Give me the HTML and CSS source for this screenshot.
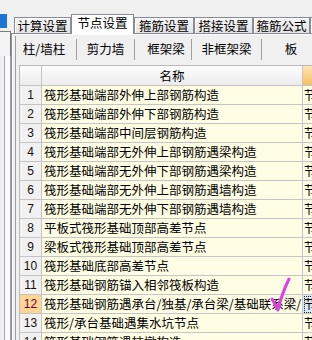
FILE: index.html
```html
<!doctype html>
<html>
<head>
<meta charset="utf-8">
<title>节点设置</title>
<link rel="stylesheet" href="styles.css">
</head>
<body>
<div class="app">

<div class="side">
    <div class="side-sel"></div>
    <div class="side-box"></div>
    <div class="side-list"></div>
</div>

<div class="main">
    <div class="tabs">
        <div class="tab t1">计算设置</div>
        <div class="tab t2 on">节点设置</div>
        <div class="tab t3">箍筋设置</div>
        <div class="tab t4">搭接设置</div>
        <div class="tab t5">箍筋公式</div>
        <div class="tab t6">修改</div>
    </div>

    <div class="page">
        <div class="inner">
            <div class="subtabs">
                <div class="sub s1">柱/墙柱</div>
                <div class="sub s2">剪力墙</div>
                <div class="sub s3">框架梁</div>
                <div class="sub s4">非框架梁</div>
                <div class="sub s5">板</div>
            </div>

            <div class="grid">
                <table>
                <colgroup>
                    <col class="c-no">
                    <col class="c-name">
                    <col class="c-pic">
                </colgroup>
                <tr class="head">
                    <td class="no"></td>
                    <td class="name">名称</td>
                    <td class="pic"></td>
                </tr>
                <tr><td class="no">1</td><td class="name">筏形基础端部外伸上部钢筋构造</td><td class="pic">节点图</td></tr>
                <tr><td class="no">2</td><td class="name">筏形基础端部外伸下部钢筋构造</td><td class="pic">节点图</td></tr>
                <tr><td class="no">3</td><td class="name">筏形基础端部中间层钢筋构造</td><td class="pic">节点图</td></tr>
                <tr><td class="no">4</td><td class="name">筏形基础端部无外伸上部钢筋遇梁构造</td><td class="pic">节点图</td></tr>
                <tr><td class="no">5</td><td class="name">筏形基础端部无外伸下部钢筋遇梁构造</td><td class="pic">节点图</td></tr>
                <tr><td class="no">6</td><td class="name">筏形基础端部无外伸上部钢筋遇墙构造</td><td class="pic">节点图</td></tr>
                <tr><td class="no">7</td><td class="name">筏形基础端部无外伸下部钢筋遇墙构造</td><td class="pic">节点图</td></tr>
                <tr><td class="no">8</td><td class="name">平板式筏形基础顶部高差节点</td><td class="pic">节点图</td></tr>
                <tr><td class="no">9</td><td class="name">梁板式筏形基础顶部高差节点</td><td class="pic">节点图</td></tr>
                <tr><td class="no">10</td><td class="name">筏形基础底部高差节点</td><td class="pic">节点图</td></tr>
                <tr><td class="no">11</td><td class="name">筏形基础钢筋锚入相邻筏板构造</td><td class="pic">节点图</td></tr>
                <tr class="cur"><td class="no">12</td><td class="name">筏形基础钢筋遇承台/独基/承台梁/基础联系梁/</td><td class="pic">节点图</td></tr>
                <tr><td class="no">13</td><td class="name">筏形/承台基础遇集水坑节点</td><td class="pic">节点图</td></tr>
                <tr><td class="no">14</td><td class="name">筏形基础钢筋遇柱墩构造</td><td class="pic">节点图</td></tr>
                </table>
            </div>
        </div>
    </div>
</div>

</div>

<svg class="mark" width="312" height="340" viewBox="0 0 312 340">
    <path d="M272 299 Q275 304 278 310 Q282 293 289 279" fill="none" stroke="#e23de6" stroke-width="3" stroke-linecap="round" stroke-linejoin="round"/>
</svg>

</body>
</html>
```

FILE: styles.css
```css
body {
    margin: 0;
    width: 312px;
    height: 340px;
    overflow: hidden;
    background-color: #f0f0f0;
    font-family: "Noto Sans CJK SC", sans-serif;
    font-size: 12.5px;
    color: black;
}

.app {
    display: flex;
    height: 340px;
}

/* left strip, mostly cut off */
.side {
    width: 11px;
    flex: none;
    display: flex;
    flex-direction: column;
    padding-top: 14px;
    box-sizing: border-box;
}
.side-sel {
    width: 7px;
    height: 14px;
    background-color: #1c74d4;
}
.side-box {
    height: 24px;
    margin-top: 3px;
    border-top: 1px solid #7a7a7a;
    border-right: 1px solid #7a7a7a;
    background-color: #f4f4f4;
}
.side-list {
    flex: 1;
    border-right: 1px solid #a0a0a0;
    border-left: 1px solid #a8a8a8;
    margin-left: 4px;
    background-color: #fbfbfb;
}

.main {
    flex: 1;
    min-width: 0;
    display: flex;
    flex-direction: column;
}

/* top tabs */
.tabs {
    height: 33px;
    display: flex;
    align-items: flex-end;
    padding-left: 3px;
    position: relative;
    z-index: 1;
}
.tab {
    flex: none;
    box-sizing: border-box;
    height: 16px;
    border: 1px solid #898c95;
    border-bottom: none;
    background: linear-gradient(#f6f6f6, #e3e3e3);
    box-shadow: inset 1px 1px #ffffff;
    display: flex;
    align-items: center;
    justify-content: center;
    line-height: 1;
    padding-top: 1px;
}
.tab.on {
    height: 20px;
    margin-bottom: -1px;
    background: #ffffff;
    box-shadow: none;
    padding-top: 0;
    padding-bottom: 2px;
}
.t1 { width: 57px; }
.t2 { width: 63px; }
.t3 { width: 60px; }
.t4 { width: 59px; }
.t5 { width: 57px; }
.t6 { width: 40px; }

.page {
    flex: 1;
    min-height: 0;
    border-top: 1px solid #898c95;
    border-left: 1px solid #898c95;
    box-shadow: inset 1px 1px #ffffff;
    padding: 2px 0 0 3px;
    display: flex;
}
.inner {
    flex: 1;
    min-width: 0;
    border-left: 1px solid #a0a0a0;
    padding-left: 3px;
    display: flex;
    flex-direction: column;
}

/* second row of tabs */
.subtabs {
    height: 26px;
    margin-left: -3px;
    display: flex;
    align-items: center;
    flex: none;
}
.sub {
    flex: none;
    box-sizing: border-box;
    height: 21px;
    border-right: 1px solid #a0a0a0;
    display: flex;
    align-items: center;
    justify-content: center;
    line-height: 1;
}
.s1 { width: 61px; padding-right: 4px; }
.s2 { width: 58px; }
.s3 { width: 57px; padding-left: 6px; }
.s4 { width: 70px; }
.s5 { width: 58px; border-right: none; }

/* the list */
.grid {
    margin-top: 3px;
    flex: 1;
    min-height: 0;
    overflow: hidden;
}
table {
    table-layout: fixed;
    width: 344px;
    border-collapse: separate;
    border-spacing: 0;
    border-top: 1px solid #b9b9b9;
    border-left: 1px solid #b9b9b9;
}
col.c-no { width: 22px; }
col.c-name { width: 261px; }
col.c-pic { width: 61px; }

td {
    height: 19px;
    padding: 0;
    box-sizing: border-box;
    border-right: 1px solid #c4c4c4;
    border-bottom: 1px solid #c4c4c4;
    white-space: nowrap;
    overflow: hidden;
    line-height: 18px;
}
td.no {
    text-align: center;
    font-family: "Liberation Sans", sans-serif;
    font-size: 12px;
    background-color: #f1f1f1;
    color: #111111;
}
td.name {
    padding-left: 2px;
    background-color: #fffee4;
}
td.pic {
    padding-left: 1px;
    background-color: #fffee4;
}

tr.head td {
    height: 20px;
    background: linear-gradient(#fdfdfd, #ececec);
}
tr.head td.name {
    text-align: center;
    padding-left: 0;
}
tr.head td.pic {
    background: linear-gradient(#fde6b4, #f5bf62);
}

tr.cur td.no {
    background-color: #fdd493;
    color: #70003c;
}
tr.cur td.pic {
    background-color: #dce8f8;
    outline: 1px dotted #222222;
    outline-offset: -2px;
}

/* hand drawn tick over the list */
.mark {
    position: absolute;
    left: 0;
    top: 0;
    pointer-events: none;
}
```
